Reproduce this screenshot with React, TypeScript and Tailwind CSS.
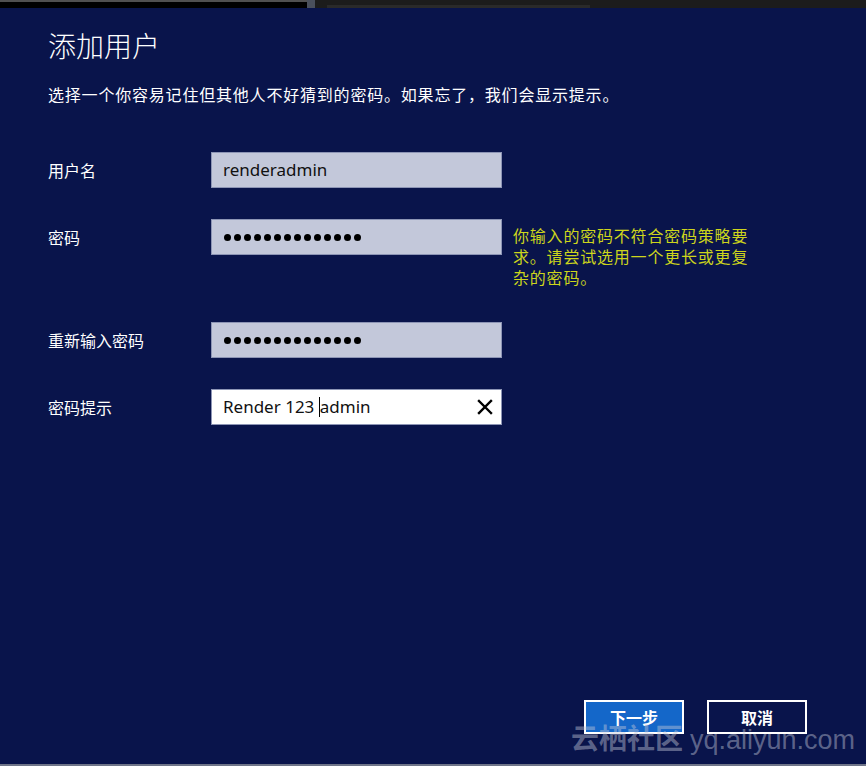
import React from "react";

const cjk = { fontFamily: '"Noto Sans CJK SC", "Noto Sans", sans-serif' };
const latin = { fontFamily: '"Noto Sans", "Noto Sans CJK SC", sans-serif' };

function Dots() {
  return (
    <div className="flex items-center gap-[3px]">
      {Array.from({ length: 14 }).map((_, i) => (
        <span key={i} className="block w-[7px] h-[7px] rounded-full bg-black" />
      ))}
    </div>
  );
}

export default function App() {
  return (
    <div className="w-[866px] h-[766px] flex flex-col overflow-hidden" style={cjk}>
      {/* top strip */}
      <div className="h-[8px] flex shrink-0">
        <div className="w-[307px] bg-black border-t-[2px] border-[#505050]" />
        <div className="w-[8px] bg-[#4a505c]" />
        <div className="flex-1 bg-[#1c1c1c] flex items-end pl-[12px]">
          <div className="w-[263px] h-[3px] bg-[#2a2a2a]" />
        </div>
      </div>

      <div className="flex-1 relative bg-[#09144b] px-[48px] flex flex-col">
        <h1 className="text-white text-[28px] leading-[36px] font-light pt-[19px]">添加用户</h1>
        <p className="text-white text-[16px] leading-[24px] mt-[19px] tracking-[0.8px]">
          选择一个你容易记住但其他人不好猜到的密码。如果忘了，我们会显示提示。
        </p>

        <div className="flex flex-col mt-[46px]">
          <div className="flex items-start">
            <div className="w-[163px] h-[36px] flex items-center text-white text-[16px]">用户名</div>
            <div className="w-[291px] h-[36px] bg-[#c3c8da] border border-[#8d95b5] flex items-center px-[11px] text-[17px] text-[#111]" style={latin}>
              renderadmin
            </div>
          </div>

          <div className="flex items-start mt-[31px]">
            <div className="w-[163px] h-[36px] flex items-center text-white text-[16px]">密码</div>
            <div className="w-[291px] h-[36px] bg-[#c3c8da] border border-[#8d95b5] flex items-center px-[12px]">
              <Dots />
            </div>
            <div className="ml-[11px] mt-[6px] w-[244px] text-[16px] leading-[21px] tracking-[0.8px] text-[#cdd51c]">
              你输入的密码不符合密码策略要求。请尝试选用一个更长或更复杂的密码。
            </div>
          </div>

          <div className="flex items-start mt-[34px]">
            <div className="w-[163px] h-[36px] flex items-center text-white text-[16px]">重新输入密码</div>
            <div className="w-[291px] h-[36px] bg-[#c3c8da] border border-[#8d95b5] flex items-center px-[12px]">
              <Dots />
            </div>
          </div>

          <div className="flex items-start mt-[31px]">
            <div className="w-[163px] h-[36px] flex items-center text-white text-[16px]">密码提示</div>
            <div className="w-[291px] h-[36px] bg-white border border-[#8d95b5] flex items-center pl-[11px] pr-[8px] text-[17px] text-[#111] whitespace-pre" style={latin}>
              <span>Render 123 </span>
              <span className="inline-block w-[1px] h-[20px] bg-black" />
              <span>admin</span>
              <span className="ml-auto flex items-center">
                <svg width="16" height="16" viewBox="0 0 16 16">
                  <path d="M2 2 L14 14 M14 2 L2 14" stroke="#000" strokeWidth="2.4" strokeLinecap="square" />
                </svg>
              </span>
            </div>
          </div>
        </div>

        <div className="mt-auto mb-[30px] flex justify-end gap-[23px] pr-[11px]">
          <button className="w-[100px] h-[34px] bg-[#1467c9] border-[2px] border-white text-white text-[16px] font-bold">下一步</button>
          <button className="w-[100px] h-[34px] border-[2px] border-white text-white text-[16px] font-bold">取消</button>
        </div>

        <div className="absolute right-[11px] bottom-[4px] flex items-baseline gap-[7px] text-[#c3c7d8]/45 pointer-events-none">
          <span className="text-[28px] font-bold" style={cjk}>云栖社区</span>
          <span className="text-[27px]" style={{ fontFamily: '"Liberation Sans", sans-serif' }}>yq.aliyun.com</span>
        </div>
      </div>

      <div className="h-[2px] bg-[#6f7589] shrink-0" />
    </div>
  );
}
